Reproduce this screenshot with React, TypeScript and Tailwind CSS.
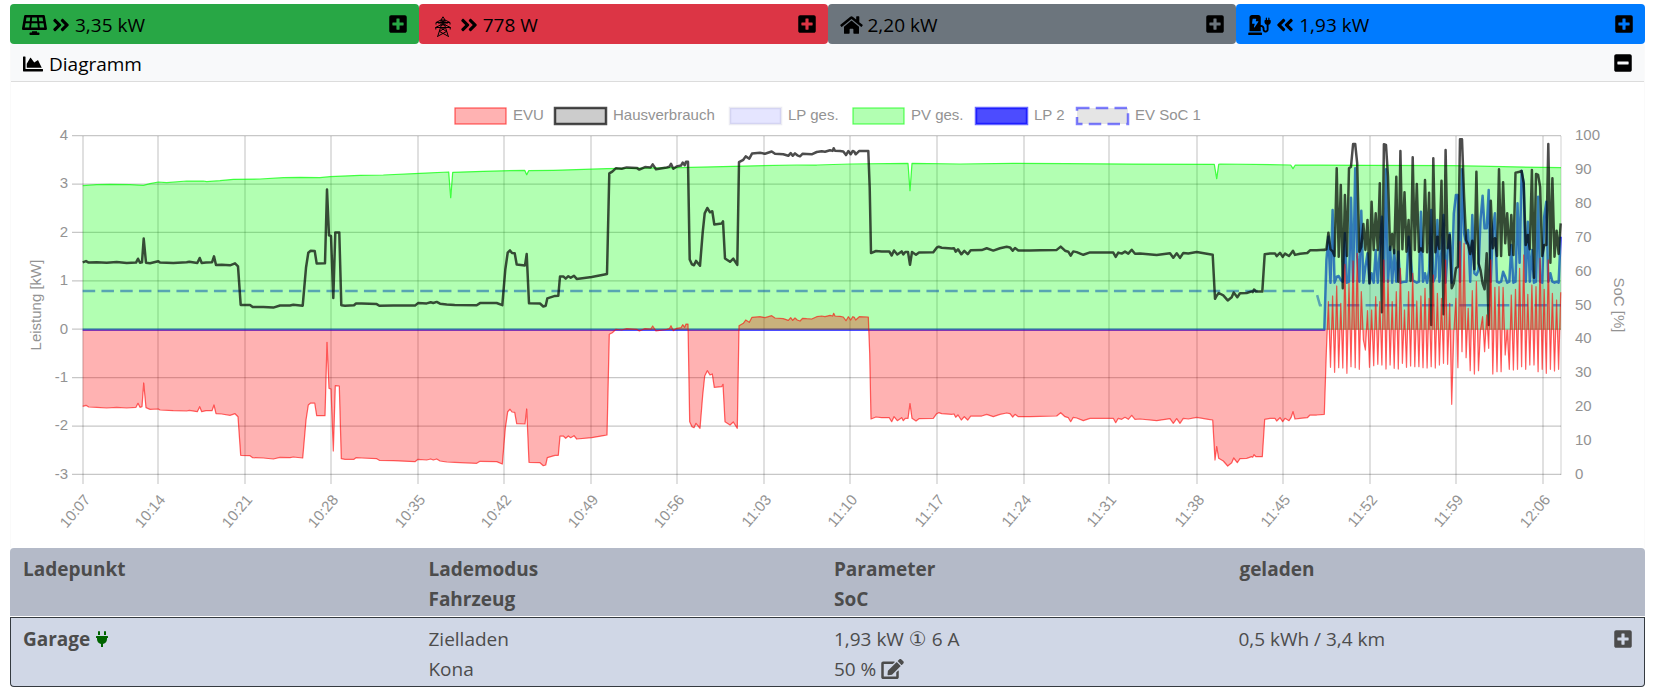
import type { ReactNode } from "react"
import {
  FaAngleDoubleLeft,
  FaAngleDoubleRight,
  FaChargingStation,
  FaChartArea,
  FaEdit,
  FaHome,
  FaMinusSquare,
  FaPlug,
  FaPlusSquare,
  FaSolarPanel,
} from "react-icons/fa"

type Point = [number, number]

// Series are stored on a grid three times finer than the drawing
const GRID = 3
const TOP = 300
const ZERO = 689
const BURST_START = 3973
const BURST_END = 4682

function trace(offset: number, data: string): Point[] {
  return data.split(" ").map((pair) => {
    const [x, y] = pair.split(",").map(Number)
    return [x + offset, y]
  })
}

// evenly spaced samples for the charging phase
function burst(values: number[]): Point[] {
  const step = (BURST_END - BURST_START) / (values.length - 1)
  return values.map((y, i) => [BURST_START + i * step, y])
}

const pv: Point[] = [
  ...trace(0, "248,257 290,254 330,253 390,254 430,256 450,251 475,246 500,248 560,243 610,243 620,245 660,242 700,238 780,237 850,233 900,232 960,233 990,230 1080,226 1150,225"),
  ...trace(1200, "60,220 146,216 152,293 158,217 250,214 374,211 380,224 386,212 460,211 620,206 840,203 1000,199 1190,195"),
  ...trace(2400, "50,195 150,192 324,190 330,272 336,190 480,192 640,190 800,191 1000,192 1243,193 1250,236 1256,193"),
  ...trace(3660, "0,192 212,195 219,206 226,195 300,195 440,196 700,197 850,200 1023,203"),
]

const evuCalm: Point[] = [
  ...trace(0, "248,919 258,916 266,921 290,922 320,924 350,922 380,924 408,922 414,910 420,922 426,920 431,849 438,923 450,928 475,927 480,930 520,932 560,933 568,931 592,935 599,920 605,935 618,932 636,932 642,915 648,941 665,942 690,946 705,941 714,950 722,1066 750,1067 758,1073 790,1074 820,1077 840,1072 870,1073 880,1071 908,1074 918,960 925,915 932,909 944,909 950,947 975,947 981,727 987,865 993,867 1000,1053 1006,857 1018,858 1024,1076 1035,1078 1062,1078 1068,1073 1085,1074 1130,1076 1138,1081 1180,1082 1245,1085"),
  ...trace(1200, "54,1078 80,1080 92,1077 100,1080 110,1077 120,1083 140,1086 164,1087 230,1090 240,1084 290,1085 307,1092 316,985 323,935 330,928 336,936 344,937 350,971 375,972 380,927 387,1087 420,1088 430,1097 437,1095 442,1073 465,1066 475,1066 480,1008 490,1008 497,1015 505,1008 512,1013 522,1007 530,1017 575,1013 610,1007 621,1005 628,703 637,698 648,688 665,690 680,686 710,688 718,693 735,686 752,687 758,678 768,693 800,688 808,686 813,677 820,692 830,685 843,683 848,674 854,682 858,672 864,672 869,965 876,980 882,983 888,970 900,985 908,885 914,828 922,812 930,825 937,822 943,862 965,860 969,853 975,965 990,975 1000,966 1012,985 1017,677 1030,670 1037,660 1048,667 1056,652 1080,650 1095,653 1115,647 1125,654 1150,656 1165,661 1172,653 1178,661 1185,654 1192,660"),
  ...trace(2400, "0,663 8,655 20,656 35,657 50,650 65,648 75,650 90,646 98,648 101,640 105,648 120,649 130,651 138,662 145,650 152,660 158,650 163,652 167,660 178,650 205,651 209,760 213,957 228,951 245,953 268,953 275,965 282,950 292,962 305,953 310,962 316,955 324,955 330,911 336,955 348,963 357,956 400,955 410,941 416,938 425,941 455,943 462,942 467,952 474,945 484,960 493,950 503,960 512,948 545,948 560,943 580,950 600,943 620,939 630,941 638,951 645,943 655,950 690,950 720,949 770,948 782,938 795,950 805,953 812,965 820,952 830,954 850,962 870,955 940,955 947,968 955,955 965,958 975,952 985,958 995,946 1005,958 1020,957 1070,962 1110,956 1120,970 1130,956 1140,970 1150,955 1165,957 1190,952 1225,958 1238,960 1245,1080 1250,1040 1256,1075 1270,1083 1283,1098 1295,1088 1301,1074 1312,1088 1320,1076 1340,1075 1355,1070"),
  ...trace(3660, "98,1072 102,1064 108,1070 127,1070 134,958 150,955 165,955 170,963 180,953 188,965 195,955 207,962 213,953 219,935 225,957 240,955 262,953 270,945 290,945 313,943"),
]

const evuBurst = burst([
  943, 750, 605, 802, 588, 817, 558, 803, 610, 804, 493, 820, 550, 800, 483, 803, 460, 808, 575, 720, 750, 632, 802,
  630, 797, 590, 793, 605, 795, 480, 807, 540, 795, 605, 805, 575, 807, 505, 790, 630, 802, 575, 798, 520, 800, 603,
  800, 588, 803, 565, 804, 595, 800, 525, 804, 580, 795, 595, 790, 480, 793, 610, 913, 700, 595, 803, 425, 755, 430,
  773, 625, 812, 572, 822, 545, 812, 690, 650, 755, 645, 745, 480, 822, 562, 815, 560, 815, 562, 765, 690, 808, 585,
  810, 568, 808, 505, 800, 465, 808, 583, 795, 555, 795, 560, 815, 475, 808, 568, 820, 480, 808, 580, 813, 600, 808,
  577,
])

const houseBurst = burst([
  450, 448, 398, 448, 454, 468, 205, 470, 255, 565, 285, 468, 205, 200, 132, 132, 190, 455, 440, 372, 450, 360, 550,
  305, 450, 340, 450, 250, 637, 133, 135, 230, 450, 402, 460, 230, 545, 153, 448, 277, 455, 360, 543, 172, 450, 252,
  455, 445, 455, 240, 457, 278, 675, 175, 457, 410, 447, 242, 643, 150, 445, 405, 565, 550, 505, 500, 118, 118, 290,
  420, 435, 462, 422, 508, 215, 490, 510, 550, 568, 460, 675, 302, 445, 415, 468, 208, 468, 247, 430, 340, 465, 345,
  465, 218, 217, 215, 213, 250, 435, 405, 448, 210, 533, 222, 225, 260, 468, 435, 435, 132, 488, 235, 470, 392, 462,
  370,
])

const chargeBurst = burst([
  689, 480, 410, 548, 330, 548, 530, 528, 540, 545, 400, 548, 545, 293, 545, 205, 470, 545, 332, 548, 500, 460, 550,
  520, 548, 450, 548, 450, 350, 545, 208, 545, 440, 548, 450, 545, 455, 548, 546, 545, 545, 410, 470, 540, 545, 548,
  545, 335, 545, 520, 548, 510, 330, 545, 530, 360, 545, 450, 345, 548, 450, 400, 548, 340, 285, 285, 545, 208, 400,
  430, 390, 545, 345, 520, 525, 510, 360, 287, 385, 385, 270, 545, 390, 340, 545, 548, 545, 515, 530, 548, 545, 435,
  548, 545, 310, 488, 212, 250, 545, 365, 545, 450, 548, 545, 290, 545, 548, 350, 305, 545, 520, 545, 548, 545, 548,
  410,
])

function valueAt(series: Point[], x: number) {
  const next = series.findIndex((p) => p[0] >= x)
  if (next <= 0) return series[0][1]
  const [x0, y0] = series[next - 1]
  const [x1, y1] = series[next]
  return y0 + ((y1 - y0) * (x - x0)) / (x1 - x0)
}

const evu = [...evuCalm, ...evuBurst]
// house consumption = grid + pv as long as no car is charging
const house: Point[] = [
  ...evuCalm.map(([x, y]): Point => [x, y + valueAt(pv, x) - ZERO]),
  ...houseBurst,
]
const charge: Point[] = [[248, ZERO], ...chargeBurst]
const soc: Point[] = [[248, 573], [3948, 573], [3960, 616], [4683, 616]]

function line(points: Point[]) {
  return "M" + points.map(([x, y]) => `${(x / GRID).toFixed(1)} ${((y + TOP) / GRID).toFixed(1)}`).join("L")
}

function area(points: Point[]) {
  const first = points[0][0]
  const last = points[points.length - 1][0]
  return line([[first, ZERO], ...points, [last, ZERO]]) + "Z"
}

const timeTicks: [string, number][] = [
  ["10:07", 83], ["10:14", 158], ["10:21", 245], ["10:28", 331], ["10:35", 418], ["10:42", 504],
  ["10:49", 591], ["10:56", 677], ["11:03", 764], ["11:10", 850], ["11:17", 937], ["11:24", 1024],
  ["11:31", 1109], ["11:38", 1197], ["11:45", 1283], ["11:52", 1370], ["11:59", 1456], ["12:06", 1543],
]

const powerTicks = [4, 3, 2, 1, 0, -1, -2, -3]
const socTicks = [100, 90, 80, 70, 60, 50, 40, 30, 20, 10, 0]

const legend = [
  { label: "EVU", x: 455, fill: "rgba(255,0,0,0.3)", stroke: "rgba(255,0,0,0.6)", width: 1.25 },
  { label: "Hausverbrauch", x: 555, fill: "rgba(0,0,0,0.2)", stroke: "rgba(0,0,0,0.7)", width: 2.5 },
  { label: "LP ges.", x: 730, fill: "rgba(0,0,255,0.1)", stroke: "rgba(90,90,150,0.12)", width: 2.5 },
  { label: "PV ges.", x: 853, fill: "rgba(0,255,0,0.3)", stroke: "rgba(0,255,0,0.6)", width: 1.25 },
  { label: "LP 2", x: 976, fill: "rgba(0,0,255,0.7)", stroke: "rgba(0,0,255,0.6)", width: 2.5 },
  { label: "EV SoC 1", x: 1077, fill: "rgba(0,0,0,0.1)", stroke: "rgba(0,0,255,0.5)", width: 2.5, dash: "12.5 6.25" },
]

function PowerChart() {
  return (
    <svg
      viewBox="11 82 1633 466"
      className="block w-full font-['Liberation_Sans',sans-serif] text-[15px]"
      role="img"
      aria-label="Diagramm"
    >
      {/* Legend */}
      {legend.map((item) => (
        <g key={item.label}>
          <rect
            x={item.x}
            y={108}
            width={51}
            height={16}
            fill={item.fill}
            stroke={item.stroke}
            strokeWidth={item.width}
            strokeDasharray={item.dash}
          />
          <text x={item.x + 58} y={120} fill="#939393">
            {item.label}
          </text>
        </g>
      ))}

      {/* Grid */}
      {timeTicks.map(([label, x]) => (
        <g key={label}>
          <line x1={x} x2={x} y1={136} y2={484} stroke="rgba(0,0,0,0.2)" strokeWidth={1.25} />
          <text transform={`translate(${x + 8} 500) rotate(-50)`} textAnchor="end" fill="#939393">
            {label}
          </text>
        </g>
      ))}
      <line x1={1561} x2={1561} y1={136} y2={475} stroke="rgba(0,0,0,0.15)" strokeWidth={1.25} />
      {powerTicks.map((kw, i) => (
        <g key={kw}>
          <line x1={72} x2={1561} y1={135.6 + i * 48.4} y2={135.6 + i * 48.4} stroke="rgba(0,0,0,0.22)" strokeWidth={1.25} />
          <text x={68} y={140 + i * 48.4} textAnchor="end" fill="#939393">
            {kw}
          </text>
        </g>
      ))}
      {socTicks.map((percent, i) => (
        <text key={percent} x={1575} y={140 + i * 33.9} fill="#939393">
          {percent}
        </text>
      ))}
      <text transform="translate(41 305) rotate(-90)" textAnchor="middle" fill="#939393">
        Leistung [kW]
      </text>
      <text transform="translate(1614 305) rotate(90)" textAnchor="middle" fill="#939393">
        SoC [%]
      </text>

      {/* Series, last dataset at the bottom */}
      <g fill="none" strokeLinejoin="round">
        <path d={line(soc)} stroke="rgba(0,0,255,0.5)" strokeWidth={2.5} strokeDasharray="12.5 6.25" />
        <path d={line(charge)} stroke="rgba(0,0,255,0.7)" strokeWidth={2.5} />
        <path d={area(pv)} fill="rgba(0,255,0,0.3)" />
        <path d={line(pv)} stroke="rgba(0,255,0,0.7)" strokeWidth={1.25} />
        <path d={area(charge)} fill="rgba(0,0,255,0.1)" />
        <path d={line(house)} stroke="rgba(0,0,0,0.7)" strokeWidth={2.5} />
        <path d={area(evu)} fill="rgba(255,0,0,0.3)" />
        <path d={line(evu)} stroke="rgba(255,0,0,0.6)" strokeWidth={1.25} />
      </g>
    </svg>
  )
}

function PylonIcon() {
  return (
    <svg viewBox="0 0 16 22" className="w-4 h-[22px]" fill="none" stroke="currentColor" strokeWidth="1" aria-hidden="true">
      <path d="M6 4 8 .8 10 4v6l3.5 11M6 4v6L2.5 21" />
      <path d="M1 6.5 6 4h4l5 2.5H1M.5 11.5 5.500 9h5l5 2.500H.5" />
      <path d="M1 6.500v2M15 6.500v2M.8 11.500v2M15.200 11.500v2M4 6.500v1.500M12 6.500v1.500" />
      <path d="M6 4l4 2.500M10 4 6 6.500 10 9.500M10 6.500 6 9.500M5.500 11.500 11.500 15.500 3.200 20M10.500 11.500 4.500 15.500 12.800 20" />
    </svg>
  )
}

interface PowerTileProps {
  className: string
  label: string
  value: string
  icon: ReactNode
}

function PowerTile({ className, label, value, icon }: PowerTileProps) {
  return (
    <div className={`flex h-10 flex-1 items-center justify-between rounded px-3 ${className}`}>
      <div className="flex items-center gap-[5px] pt-0.5">
        {icon}
        <span>{value}</span>
      </div>
      <button type="button" aria-label={label}>
        <FaPlusSquare className="h-5 w-[18px]" />
      </button>
    </div>
  )
}

export default function App() {
  return (
    <main className="min-h-screen bg-white pt-1 pr-[18px] pl-[10px] font-['Open_Sans','Noto_Sans',sans-serif] text-[19px] leading-[30px] text-black">
      {/* Power overview */}
      <div className="flex">
        <PowerTile
          className="bg-[#28a745]"
          label="PV Details"
          value="3,35 kW"
          icon={
            <>
              <FaSolarPanel className="h-5 w-[25px]" />
              <FaAngleDoubleRight className="h-5 w-[18px]" />
            </>
          }
        />
        <PowerTile
          className="bg-[#dc3545]"
          label="EVU Details"
          value="778 W"
          icon={
            <>
              <span className="mx-1 mt-1">
                <PylonIcon />
              </span>
              <FaAngleDoubleRight className="h-5 w-[18px]" />
            </>
          }
        />
        <PowerTile
          className="bg-[#6c757d]"
          label="Hausverbrauch Details"
          value="2,20 kW"
          icon={<FaHome className="h-5 w-[23px]" />}
        />
        <PowerTile
          className="bg-[#007bff]"
          label="Ladepunkte Details"
          value="1,93 kW"
          icon={
            <>
              <FaChargingStation className="h-5 w-[23px]" />
              <FaAngleDoubleLeft className="h-5 w-[18px]" />
            </>
          }
        />
      </div>

      {/* Chart */}
      <section className="border-x border-[#fafafa]">
        <header className="flex h-[38px] items-center justify-between border-b border-[#dcdcdc] bg-[#f8f9fa] px-3">
          <h2 className="flex items-center gap-[6px] pt-[3px]">
            <FaChartArea className="h-5 w-5" />
            Diagramm
          </h2>
          <button type="button" aria-label="Diagramm einklappen">
            <FaMinusSquare className="h-5 w-[18px]" />
          </button>
        </header>
        <PowerChart />
      </section>

      {/* Charge points */}
      <table className="w-full table-fixed border-separate border-spacing-0 text-left align-top text-[#4c4c4c]">
        <colgroup>
          <col className="w-[24.8%]" />
          <col className="w-[24.8%]" />
          <col className="w-[24.8%]" />
          <col />
        </colgroup>
        <thead>
          <tr className="align-top">
            <th className="rounded-tl border-b border-white bg-[#b4bac8] px-[13px] pt-1.5 pb-0.5">Ladepunkt</th>
            <th className="border-b border-white bg-[#b4bac8] px-[13px] pt-1.5 pb-0.5">
              Lademodus
              <br />
              Fahrzeug
            </th>
            <th className="border-b border-white bg-[#b4bac8] px-[13px] pt-1.5 pb-0.5">
              Parameter
              <br />
              SoC
            </th>
            <th className="rounded-tr border-b border-white bg-[#b4bac8] px-[13px] pt-1.5 pb-0.5">geladen</th>
          </tr>
        </thead>
        <tbody>
          <tr className="align-top">
            <th scope="row" className="rounded-bl border-y border-l border-[#343a40] bg-[#d0d7e6] px-3 pt-1.5 pb-0.5">
              <span className="flex items-center gap-[6px]">
                Garage
                <FaPlug className="h-4 w-3 text-[#006400]" />
              </span>
            </th>
            <td className="border-y border-[#343a40] bg-[#d0d7e6] px-[13px] pt-1.5 pb-0.5">
              Zielladen
              <br />
              Kona
            </td>
            <td className="border-y border-[#343a40] bg-[#d0d7e6] px-[13px] pt-1.5 pb-0.5">
              1,93 kW <span className="font-['DejaVu_Sans',sans-serif] text-xl leading-none">①</span> 6 A
              <span className="flex items-center gap-[5px]">
                50 %
                <button type="button" aria-label="SoC bearbeiten">
                  <FaEdit className="h-5 w-[23px]" />
                </button>
              </span>
            </td>
            <td className="rounded-br border-y border-r border-[#343a40] bg-[#d0d7e6] px-3 pt-1.5 pb-0.5">
              <div className="flex items-center justify-between">
                0,5 kWh / 3,4 km
                <button type="button" aria-label="Ladepunkt Details">
                  <FaPlusSquare className="h-5 w-[18px]" />
                </button>
              </div>
            </td>
          </tr>
        </tbody>
      </table>
    </main>
  )
}
